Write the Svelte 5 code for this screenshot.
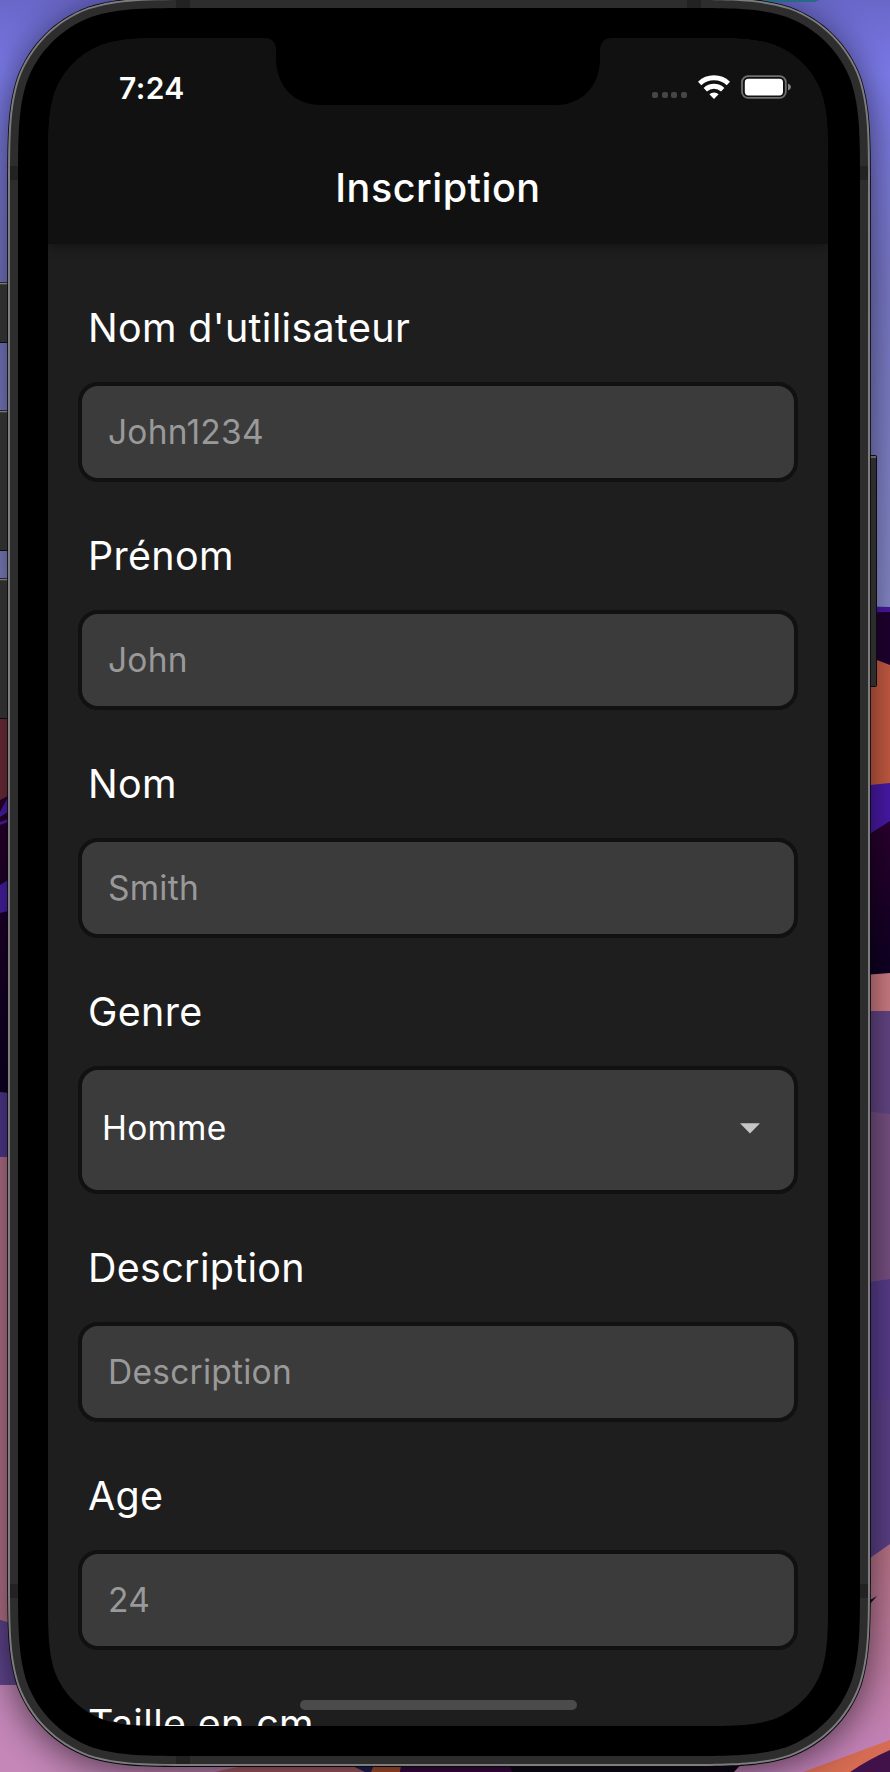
<script>
  // Rounded rectangle with continuous-curvature corners.
  function smoothRect(x, y, w, h, r) {
    const k = [
      [1.52866, 0], [1.08849, 0], [0.86841, 0], [0.63149, 0.07491],
      [0.37282, 0.16906], [0.16906, 0.37282], [0.07491, 0.63149],
      [0, 0.86841], [0, 1.08849], [0, 1.52866]
    ];
    const f = (n) => n.toFixed(2);
    const tl = ([a, b]) => `${f(x + a * r)} ${f(y + b * r)}`;
    const tr = ([a, b]) => `${f(x + w - a * r)} ${f(y + b * r)}`;
    const br = ([a, b]) => `${f(x + w - a * r)} ${f(y + h - b * r)}`;
    const bl = ([a, b]) => `${f(x + a * r)} ${f(y + h - b * r)}`;
    const run = (pts) => `C${pts.slice(1).join(' ')}`;
    const rev = [...k].reverse();
    return [
      `M${tl(k[0])}`,
      `L${tr(k[0])}`, run(k.map(tr)),
      `L${br(rev[0])}`, run(rev.map(br)),
      `L${bl(k[0])}`, run(k.map(bl)),
      `L${tl(rev[0])}`, run(rev.map(tl)), 'Z'
    ].join(' ');
  }

  const edge = smoothRect(7.2, -2.8, 863.6, 1769.8, 128);
  const rim = smoothRect(8, -2, 862, 1768, 127);
  const band = smoothRect(10, 0, 858, 1764, 125);
  const bezel = smoothRect(18, 8, 842, 1748, 117);
  const screenClip = smoothRect(0, 0, 780, 1688, 87);

  const fields = [
    { label: "Nom d'utilisateur", hint: 'John1234' },
    { label: 'Prénom', hint: 'John' },
    { label: 'Nom', hint: 'Smith' },
    { label: 'Genre', value: 'Homme' },
    { label: 'Description', hint: 'Description' },
    { label: 'Age', hint: '24' },
    { label: 'Taille en cm', hint: '' }
  ];
</script>

<main class="desktop">
  <svg class="backdrop" width="890" height="1772" viewBox="0 0 890 1772" aria-hidden="true">
    <defs>
      <linearGradient id="sky" x1="0" y1="0" x2="0" y2="620" gradientUnits="userSpaceOnUse">
        <stop offset="0" stop-color="#6967c8" />
        <stop offset="0.12" stop-color="#7b7ae8" />
        <stop offset="0.45" stop-color="#7978c8" />
        <stop offset="1" stop-color="#8488c6" />
      </linearGradient>
      <linearGradient id="night" x1="0" y1="0" x2="0" y2="1">
        <stop offset="0" stop-color="#2c0030" />
        <stop offset="1" stop-color="#0c0022" />
      </linearGradient>
      <linearGradient id="dune" x1="0" y1="0" x2="0" y2="1">
        <stop offset="0" stop-color="#b87286" />
        <stop offset="1" stop-color="#c383bb" />
      </linearGradient>
      <filter id="soft" x="-10%" y="-10%" width="120%" height="120%">
        <feGaussianBlur stdDeviation="18" />
      </filter>
    </defs>
    <rect width="890" height="720" fill="url(#sky)" />
    <!-- left strip -->
    <path d="M0 716H20V800H0Z" fill="#732f3c" />
    <path d="M0 800L20 790V1096H0Z" fill="url(#night)" />
    <path d="M0 812L8 797V812L0 817ZM0 822L8 819V822L0 825ZM0 885L8 880V911L0 913Z" fill="#4a20ac" />
    <path d="M0 1092L20 1094V1157H0Z" fill="#533a93" />
    <path d="M0 1157H20V1630L0 1620Z" fill="#b8748c" />
    <path d="M0 1620L30 1628V1686H0Z" fill="#60458f" />
    <path d="M0 1685H240V1772H0Z" fill="#c487b8" />
    <!-- right strip -->
    <path d="M850 606L890 607V670H850Z" fill="#4a169e" />
    <path d="M850 613L890 612V670H850Z" fill="#1e0030" />
    <path d="M850 650L877 660L890 665V786H850Z" fill="#c75b43" />
    <path d="M850 787L890 783V840H850Z" fill="#4a1aaa" />
    <path d="M850 843L871 833L890 821V985H850Z" fill="url(#night)" />
    <path d="M850 976L890 973V1015H850Z" fill="#cf7d84" />
    <path d="M850 1011H890V1120H850Z" fill="#634585" />
    <path d="M850 1109L890 1114V1300H850Z" fill="#765082" />
    <path d="M850 1285L890 1279V1570H850Z" fill="#583d8c" />
    <path d="M850 1400H890V1570H850Z" fill="#65487f" opacity="0.3" />
    <path d="M850 1572L890 1544V1772H730V1700H850Z" fill="url(#dune)" />
    <path d="M870 1600L877 1596L870 1604Z" fill="#101228" />
    <path d="M795 1775L890 1740V1772Z" fill="#d66c53" />
    <path d="M846 1775Q865 1761 890 1750V1775Z" fill="#41114a" />
    <!-- lower edge -->
    <path d="M215 1772Q240 1765 300 1760H370V1772Z" fill="#b0606a" />
    <path d="M340 1760H390L380 1772H365Z" fill="#222060" />
    <path d="M376 1760H404L400 1772H371Z" fill="#b85430" />
    <path d="M402 1760H508L512 1772H400Z" fill="#3c0846" />
    <path d="M508 1760H745L734 1772H512Z" fill="#0e0717" />
    <path d={edge} fill="#000" opacity="0.58" filter="url(#soft)" transform="translate(0 6)" />
    <path d="M758 0H819L815 2H758Z" fill="#286a83" />

    <!-- side buttons -->
    <g fill="#2d2d2d" stroke="#0c0c10">
      <rect x="-4" y="282.5" width="14" height="60" />
      <rect x="-4" y="410.5" width="14" height="140" />
      <rect x="-4" y="578.5" width="14" height="140" />
      <rect x="866" y="455.5" width="10.5" height="231" rx="1" />
    </g>
    <path d="M0 283.5H8M0 411.5H8M0 579.5H8M870 457H876" stroke="#777" stroke-width="1.4" />

    <path d={edge} fill="#07070c" />
    <path d={rim} fill="#7d7d7d" />
    <path d={band} fill="#2d2d2d" />
    <path d="M176 0h14v9h-14zM687 0h14v9h-14zM10 166h9v14h-9zM859 166h9v14h-9zM10 1584h9v14h-9zM859 1584h9v14h-9zM176 1755h14v9h-14z" fill="#222" />
    <path d={bezel} fill="#000" />
  </svg>

  <section class="screen" style:clip-path={`path("${screenClip}")`}>
    <header>
      <div class="status">
        <span class="time">7:24</span>
        <div class="indicators">
          <span class="dots"><i></i><i></i><i></i><i></i></span>
          <svg class="wifi" width="32" height="24" viewBox="0 0 32 24" aria-label="Wi-Fi">
            <g fill="none" stroke="#fff" stroke-width="4.9">
              <path d="M1.6 8.5A20.8 20.8 0 0 1 30.4 8.5" />
              <path d="M7.3 14.7A12.7 12.7 0 0 1 24.7 14.7" />
            </g>
            <path d="M11.4 19.2A6.8 6.8 0 0 1 20.6 19.2L16 23.9Z" fill="#fff" />
          </svg>
          <svg class="battery" width="51" height="24" viewBox="0 0 51 24" aria-label="Batterie">
            <rect x="1" y="1.1" width="43.8" height="21.8" rx="6.2" fill="none" stroke="#707070" stroke-width="1.8" />
            <rect x="3.8" y="3.8" width="38.2" height="16.6" rx="3.6" fill="#fff" />
            <path d="M47 8.6Q50 9.7 50 12T47 15.4Z" fill="#858585" />
          </svg>
        </div>
      </div>
      <h1>Inscription</h1>
    </header>

    <form>
      {#each fields as field}
        <div class="group">
          <span class="label">{field.label}</span>
          {#if field.value}
            <button type="button" class="box select">
              <span>{field.value}</span>
              <svg width="20" height="11" viewBox="0 0 20 11"><path d="M0 0.3H20L10 10.6Z" fill="#c6c6c6" /></svg>
            </button>
          {:else}
            <input class="box" type="text" placeholder={field.hint} aria-label={field.label} />
          {/if}
        </div>
      {/each}
    </form>

    <svg class="notch" width="348" height="68" viewBox="0 0 348 68" aria-hidden="true">
      <path d="M0 0H348C340 0 336 4 336 13V20C336 48 318 67 292 67H57C30 67 12 48 12 20V13C12 4 8 0 0 0Z" fill="#000" />
    </svg>
    <div class="home"></div>
  </section>
</main>

<style>
  :global(body) {
    margin: 0;
    background: #1e1e1e;
  }

  .desktop {
    position: relative;
    box-sizing: border-box;
    width: 890px;
    height: 1772px;
    padding: 38px 62px 46px 48px;
    overflow: hidden;
    font-family: Inter, "Liberation Sans", sans-serif;
    color: #fff;
  }

  .backdrop {
    position: absolute;
    inset: 0;
  }

  .screen {
    position: relative;
    display: flex;
    flex-direction: column;
    height: 1688px;
    overflow: hidden;
    background: #1e1e1e;
  }

  header {
    position: relative;
    flex: none;
    height: 206px;
    background: #111;
    box-shadow: 0 2px 10px rgba(0, 0, 0, 0.4);
  }

  .status {
    display: flex;
    justify-content: space-between;
    align-items: center;
    height: 98px;
    padding: 2px 36px 0 71px;
    box-sizing: border-box;
  }

  .time {
    font-size: 30px;
    font-weight: 600;
    line-height: 36px;
    letter-spacing: 0.4px;
  }

  .indicators {
    display: flex;
    align-items: center;
    margin-top: -2px;
  }

  .dots {
    display: flex;
    gap: 3.4px;
    margin: 15px 11.5px 0 0;
  }

  .dots i {
    width: 6px;
    height: 6px;
    border-radius: 2px;
    background: #464646;
  }

  .wifi {
    margin-right: 11px;
  }

  h1 {
    margin: 28px 0 0;
    font-size: 39.5px;
    font-weight: 500;
    line-height: 48px;
    letter-spacing: 0.5px;
    text-align: center;
  }

  form {
    display: flex;
    flex-direction: column;
    padding: 10px 30px 0;
  }

  .group {
    display: flex;
    flex: none;
    flex-direction: column;
  }

  .label {
    height: 78px;
    padding: 50px 0 0 10px;
    font-size: 39.4px;
    line-height: 48px;
    letter-spacing: 0.35px;
    white-space: nowrap;
  }

  .box {
    box-sizing: border-box;
    width: 100%;
    height: 100px;
    margin: 0;
    padding: 0 26px 1px;
    border: 4px solid #111;
    border-radius: 20px;
    outline: none;
    background: #3b3b3b;
    color: #fff;
    font: 400 33.5px Inter, "Liberation Sans", sans-serif;
    letter-spacing: 0.25px;
  }

  .box::placeholder {
    color: #999;
    opacity: 1;
  }

  .select {
    display: flex;
    align-items: center;
    justify-content: space-between;
    height: 128px;
    padding: 0 34px 4px 20px;
    text-align: left;
  }

  .select svg {
    margin-top: 1px;
  }

  .notch {
    position: absolute;
    top: 0;
    left: 216px;
  }

  .home {
    position: absolute;
    left: 252px;
    bottom: 16px;
    width: 277px;
    height: 10px;
    border-radius: 5px;
    background: #4b4b4b;
  }
</style>
